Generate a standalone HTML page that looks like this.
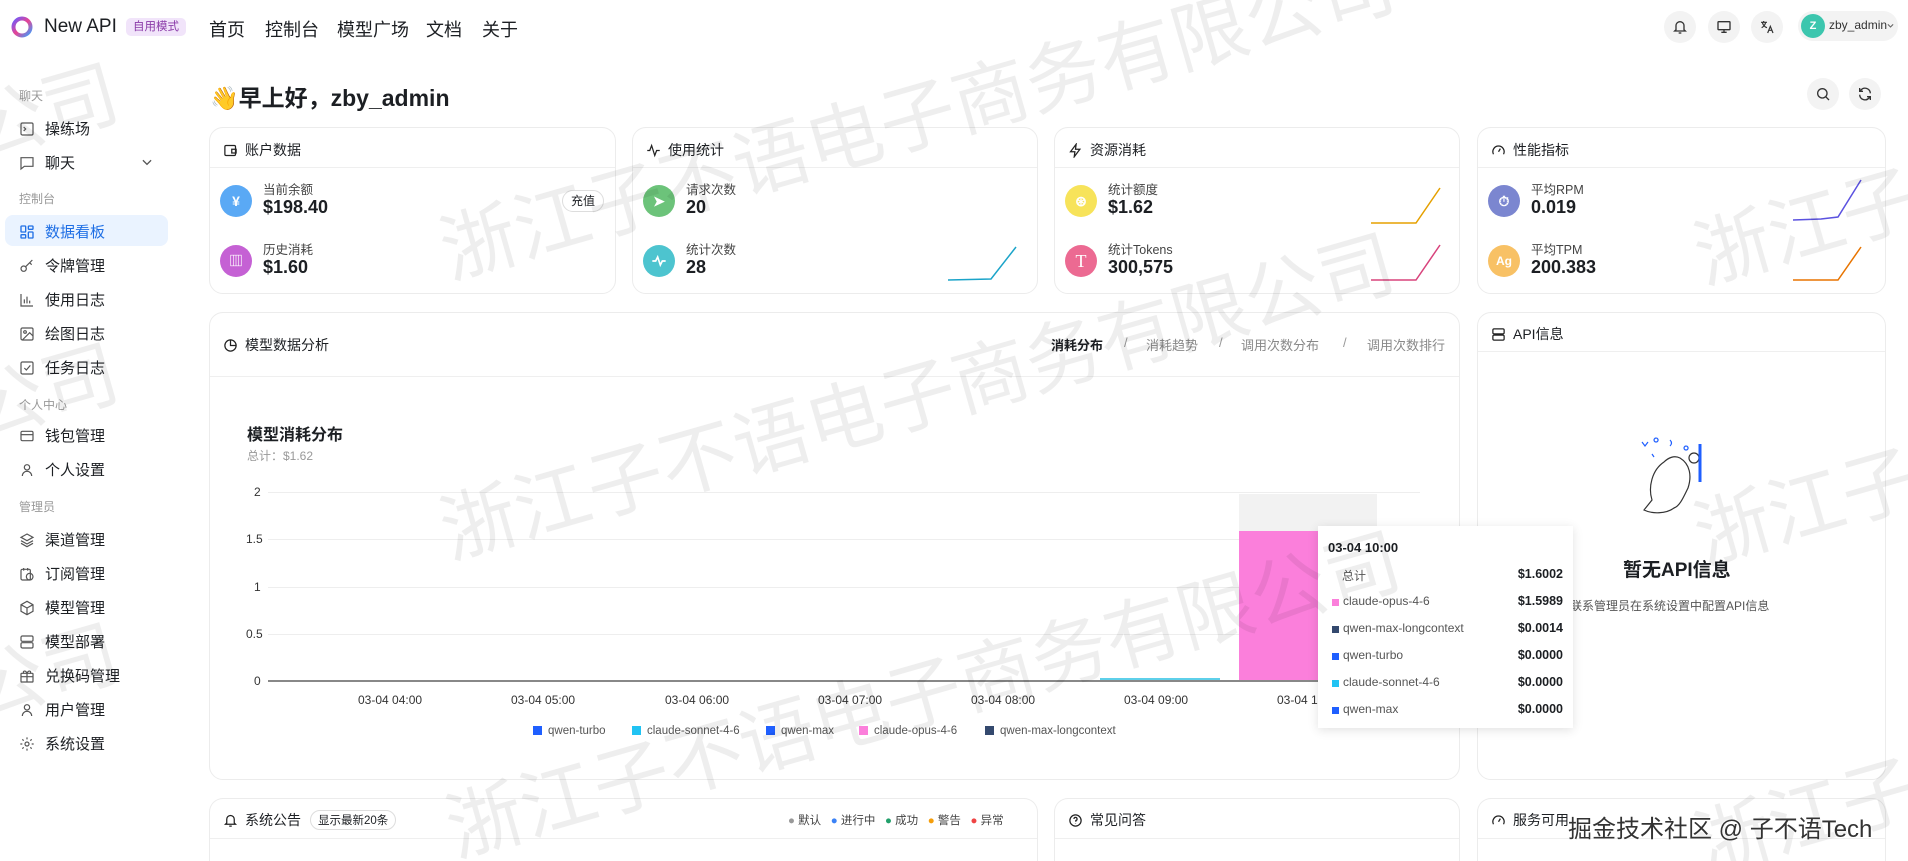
<!DOCTYPE html>
<html style="width:1908px;height:861px;overflow:hidden"><head><meta charset="utf-8">
<style>
*{margin:0;padding:0;box-sizing:border-box}
body{width:1908px;height:861px;overflow:hidden;background:#fff;font-family:"Liberation Sans","Noto Sans CJK SC",sans-serif;color:#1c1f23;position:relative}
.a{position:absolute;white-space:nowrap}
.card{position:absolute;border:1px solid #ececec;border-radius:14px;background:#fff}
.bc{border-bottom:none;border-bottom-left-radius:0;border-bottom-right-radius:0}
.hd{position:absolute;left:0;right:0;border-bottom:1px solid #efefef}
.ht{position:absolute;font-size:14px;color:#1c1f23;display:flex;align-items:center;gap:7px}
.sb{font-size:15px;color:#1c1f23;display:flex;align-items:center}
.sb svg{margin-right:10px}
.lab{font-size:12px;color:#999}
.circ{position:absolute;width:32px;height:32px;border-radius:50%;display:flex;align-items:center;justify-content:center;color:#fff;font-size:14px;font-weight:bold}
.sl{font-size:12.5px;color:#444}
.sv{font-size:18px;font-weight:bold;color:#1c1f23}
.wm{position:absolute;font-size:76px;color:rgba(0,0,0,0.065);transform:rotate(-16deg);transform-origin:0 100%;white-space:nowrap;font-family:"Noto Sans CJK SC",sans-serif;pointer-events:none;z-index:50}
.wmbox{position:absolute;left:0;top:0;width:1908px;height:861px;overflow:hidden;z-index:50;pointer-events:none}
.ax{font-size:12px;color:#333}
.sq{display:inline-block;width:9px;height:9px;margin-right:6px;vertical-align:-1px}
.ib{position:absolute;width:32px;height:32px;border-radius:50%;background:#f3f3f3;display:flex;align-items:center;justify-content:center}
</style></head><body>

<!-- header -->
<svg class="a" style="left:10px;top:15px" width="24" height="24" viewBox="0 0 24 24"><defs><linearGradient id="g1" x1="0" y1="0" x2="1" y2="1"><stop offset="0" stop-color="#6b5cff"/><stop offset=".5" stop-color="#e84393"/><stop offset="1" stop-color="#3aa0ff"/></linearGradient></defs><circle cx="12" cy="12" r="8.5" fill="none" stroke="url(#g1)" stroke-width="4"/><circle cx="12" cy="12" r="2" fill="#fff"/></svg>
<div class="a" style="left:44px;top:16px;font-size:19px;color:#1c1f23">New API</div>
<div class="a" style="left:126px;top:18px;width:60px;height:18px;border-radius:5px;background:#f1e4fa;color:#8a3aa8;font-size:11.5px;text-align:center;line-height:18px">自用模式</div>
<div class="a" style="left:209px;top:16px;font-size:18px">首页</div>
<div class="a" style="left:265px;top:16px;font-size:18px">控制台</div>
<div class="a" style="left:337px;top:16px;font-size:18px">模型广场</div>
<div class="a" style="left:426px;top:16px;font-size:18px">文档</div>
<div class="a" style="left:482px;top:16px;font-size:18px">关于</div>

<div class="ib" style="left:1664px;top:11px"><svg width="16" height="16" viewBox="0 0 24 24" fill="none" stroke="#333" stroke-width="2"><path d="M6 16V10a6 6 0 0 1 12 0v6l2 2H4z"/><path d="M10 21h4"/></svg></div>
<div class="ib" style="left:1708px;top:11px"><svg width="16" height="16" viewBox="0 0 24 24" fill="none" stroke="#333" stroke-width="2"><rect x="3" y="4" width="18" height="12" rx="1"/><path d="M12 16v4M8 20h8"/></svg></div>
<div class="ib" style="left:1751px;top:11px"><svg width="16" height="16" viewBox="0 0 24 24" fill="none" stroke="#333" stroke-width="1.8"><path d="M3 5h9M7 3v2M5 5c1 4 4 7 7 8M10 5c-1 4-4 7-6 8M13 21l4-10 4 10M14.5 17h5"/></svg></div>
<div class="a" style="left:1798px;top:11px;width:100px;height:30px;border-radius:15px;background:#f3f3f3"></div>
<div class="a" style="left:1801px;top:14px;width:24px;height:24px;border-radius:50%;background:#3cc6ae;color:#fff;font-size:11px;font-weight:bold;text-align:center;line-height:24px">Z</div>
<div class="a" style="left:1829px;top:18px;font-size:12px;color:#333">zby_admin</div>
<svg class="a" style="left:1886px;top:21px" width="9" height="9" viewBox="0 0 24 24" fill="none" stroke="#666" stroke-width="3"><path d="M5 9l7 7 7-7"/></svg>

<!-- sidebar -->
<div class="a lab" style="left:19px;top:87px">聊天</div>
<div class="a sb" style="left:19px;top:118px"><svg width="16" height="16" viewBox="0 0 24 24" fill="none" stroke="#555" stroke-width="1.8"><rect x="3" y="3" width="18" height="18" rx="2"/><path d="M7 9l3 3-3 3"/></svg>操练场</div>
<div class="a sb" style="left:19px;top:152px"><svg width="16" height="16" viewBox="0 0 24 24" fill="none" stroke="#555" stroke-width="1.8"><path d="M3 4h18v13H8l-5 4z"/></svg>聊天</div>
<svg class="a" style="left:140px;top:155px" width="14" height="14" viewBox="0 0 24 24" fill="none" stroke="#555" stroke-width="2.2"><path d="M5 9l7 7 7-7"/></svg>
<div class="a lab" style="left:19px;top:190px">控制台</div>
<div class="a" style="left:5px;top:215px;width:163px;height:31px;border-radius:8px;background:#eaf3ff"></div>
<div class="a sb" style="left:19px;top:221px;color:#1f6fe5"><svg width="16" height="16" viewBox="0 0 24 24" fill="none" stroke="#1f6fe5" stroke-width="2"><rect x="3" y="3" width="7" height="9" rx="1"/><rect x="14" y="3" width="7" height="5" rx="1"/><rect x="14" y="12" width="7" height="9" rx="1"/><rect x="3" y="16" width="7" height="5" rx="1"/></svg>数据看板</div>
<div class="a sb" style="left:19px;top:255px"><svg width="16" height="16" viewBox="0 0 24 24" fill="none" stroke="#555" stroke-width="1.8"><circle cx="7" cy="16" r="4"/><path d="M10 13l10-10M16 7l3 3"/></svg>令牌管理</div>
<div class="a sb" style="left:19px;top:289px"><svg width="16" height="16" viewBox="0 0 24 24" fill="none" stroke="#555" stroke-width="1.8"><path d="M3 3v18h18M8 17v-6M12 17V7M16 17v-4"/></svg>使用日志</div>
<div class="a sb" style="left:19px;top:323px"><svg width="16" height="16" viewBox="0 0 24 24" fill="none" stroke="#555" stroke-width="1.8"><rect x="3" y="3" width="18" height="18" rx="2"/><circle cx="9" cy="9" r="2"/><path d="M21 15l-5-5L5 21"/></svg>绘图日志</div>
<div class="a sb" style="left:19px;top:357px"><svg width="16" height="16" viewBox="0 0 24 24" fill="none" stroke="#555" stroke-width="1.8"><rect x="3" y="3" width="18" height="18" rx="2"/><path d="M8 12l3 3 6-7"/></svg>任务日志</div>
<div class="a lab" style="left:19px;top:396px">个人中心</div>
<div class="a sb" style="left:19px;top:425px"><svg width="16" height="16" viewBox="0 0 24 24" fill="none" stroke="#555" stroke-width="1.8"><rect x="3" y="5" width="18" height="14" rx="2"/><path d="M3 10h18"/></svg>钱包管理</div>
<div class="a sb" style="left:19px;top:459px"><svg width="16" height="16" viewBox="0 0 24 24" fill="none" stroke="#555" stroke-width="1.8"><circle cx="12" cy="8" r="4"/><path d="M5 21c0-4 3-7 7-7s7 3 7 7"/></svg>个人设置</div>
<div class="a lab" style="left:19px;top:498px">管理员</div>
<div class="a sb" style="left:19px;top:529px"><svg width="16" height="16" viewBox="0 0 24 24" fill="none" stroke="#555" stroke-width="1.8"><path d="M12 3l9 5-9 5-9-5z M3 13l9 5 9-5M3 17l9 5 9-5"/></svg>渠道管理</div>
<div class="a sb" style="left:19px;top:563px"><svg width="16" height="16" viewBox="0 0 24 24" fill="none" stroke="#555" stroke-width="1.8"><rect x="3" y="5" width="14" height="16" rx="2"/><path d="M7 3v4M13 3v4"/><circle cx="16" cy="16" r="5"/></svg>订阅管理</div>
<div class="a sb" style="left:19px;top:597px"><svg width="16" height="16" viewBox="0 0 24 24" fill="none" stroke="#555" stroke-width="1.8"><path d="M12 2l9 5v10l-9 5-9-5V7z M3 7l9 5 9-5M12 12v10"/></svg>模型管理</div>
<div class="a sb" style="left:19px;top:631px"><svg width="16" height="16" viewBox="0 0 24 24" fill="none" stroke="#555" stroke-width="1.8"><rect x="3" y="3" width="18" height="8" rx="2"/><rect x="3" y="13" width="18" height="8" rx="2"/></svg>模型部署</div>
<div class="a sb" style="left:19px;top:665px"><svg width="16" height="16" viewBox="0 0 24 24" fill="none" stroke="#555" stroke-width="1.8"><rect x="3" y="8" width="18" height="13" rx="1"/><path d="M12 8v13M3 13h18M12 8c-2-5-7-4-5 0M12 8c2-5 7-4 5 0"/></svg>兑换码管理</div>
<div class="a sb" style="left:19px;top:699px"><svg width="16" height="16" viewBox="0 0 24 24" fill="none" stroke="#555" stroke-width="1.8"><circle cx="12" cy="8" r="4"/><path d="M5 21c0-4 3-7 7-7s7 3 7 7"/></svg>用户管理</div>
<div class="a sb" style="left:19px;top:733px"><svg width="16" height="16" viewBox="0 0 24 24" fill="none" stroke="#555" stroke-width="1.8"><circle cx="12" cy="12" r="3"/><path d="M12 2v3M12 19v3M2 12h3M19 12h3M5 5l2 2M17 17l2 2M5 19l2-2M17 7l2-2"/></svg>系统设置</div>

<!-- greeting -->
<div class="a" style="left:210px;top:79px;font-size:23px;font-weight:bold">👋早上好，zby_admin</div>
<div class="ib" style="left:1807px;top:78px"><svg width="16" height="16" viewBox="0 0 24 24" fill="none" stroke="#333" stroke-width="2"><circle cx="11" cy="11" r="7"/><path d="M16 16l5 5"/></svg></div>
<div class="ib" style="left:1849px;top:78px"><svg width="16" height="16" viewBox="0 0 24 24" fill="none" stroke="#333" stroke-width="2"><path d="M20 11a8 8 0 0 0-14-5l-2 2M4 13a8 8 0 0 0 14 5l2-2M4 3v5h5M20 21v-5h-5"/></svg></div>

<!-- row cards -->
<div class="card" style="left:209px;top:127px;width:407px;height:167px">
 <div class="hd" style="top:0;height:40px"></div>
 <div class="ht" style="left:13px;top:12px"><svg width="15" height="15" viewBox="0 0 24 24" fill="none" stroke="#222" stroke-width="2"><rect x="3" y="4" width="17" height="16" rx="2"/><path d="M14 10h7v6h-7z"/></svg>账户数据</div>
 <div class="circ" style="left:10px;top:57px;background:#5aa9f5">¥</div>
 <div class="a sl" style="left:53px;top:51px">当前余额</div>
 <div class="a sv" style="left:53px;top:69px">$198.40</div>
 <div class="a" style="left:352px;top:62px;width:42px;height:22px;border:1px solid #ddd;border-radius:11px;font-size:12px;text-align:center;line-height:20px">充值</div>
 <div class="circ" style="left:10px;top:117px;background:#c561d4">▥</div>
 <div class="a sl" style="left:53px;top:111px">历史消耗</div>
 <div class="a sv" style="left:53px;top:129px">$1.60</div>
</div>
<div class="card" style="left:632px;top:127px;width:406px;height:167px">
 <div class="hd" style="top:0;height:40px"></div>
 <div class="ht" style="left:13px;top:12px"><svg width="15" height="15" viewBox="0 0 24 24" fill="none" stroke="#222" stroke-width="2"><path d="M2 12h4l3-8 5 16 3-8h5"/></svg>使用统计</div>
 <div class="circ" style="left:10px;top:57px;background:#6cc37a">➤</div>
 <div class="a sl" style="left:53px;top:51px">请求次数</div>
 <div class="a sv" style="left:53px;top:69px">20</div>
 <div class="circ" style="left:10px;top:117px;background:#4dc4cf"><svg width="16" height="16" viewBox="0 0 24 24" fill="none" stroke="#fff" stroke-width="2.5"><path d="M2 12h5l3-6 4 12 3-6h5"/></svg></div>
 <div class="a sl" style="left:53px;top:111px">统计次数</div>
 <div class="a sv" style="left:53px;top:129px">28</div>
 <svg class="a" style="left:313px;top:115px" width="75" height="40"><polyline points="2,37 45,36 70,4" fill="none" stroke="#1ba4c9" stroke-width="1.5"/></svg>
</div>
<div class="card" style="left:1054px;top:127px;width:406px;height:167px">
 <div class="hd" style="top:0;height:40px"></div>
 <div class="ht" style="left:13px;top:12px"><svg width="15" height="15" viewBox="0 0 24 24" fill="none" stroke="#222" stroke-width="2"><path d="M13 2L4 14h7l-1 8 9-12h-7z"/></svg>资源消耗</div>
 <div class="circ" style="left:10px;top:57px;background:#f7e35a">⊛</div>
 <div class="a sl" style="left:53px;top:51px">统计额度</div>
 <div class="a sv" style="left:53px;top:69px">$1.62</div>
 <div class="circ" style="left:10px;top:117px;background:#ec6a92;font-family:'Liberation Serif',serif;font-size:18px;font-weight:normal">T</div>
 <div class="a sl" style="left:53px;top:111px">统计Tokens</div>
 <div class="a sv" style="left:53px;top:129px">300,575</div>
 <svg class="a" style="left:314px;top:58px" width="75" height="40"><polyline points="2,37 47,37 71,2" fill="none" stroke="#e5a000" stroke-width="1.5"/></svg>
 <svg class="a" style="left:314px;top:115px" width="75" height="40"><polyline points="2,37 47,37 71,2" fill="none" stroke="#d8437c" stroke-width="1.5"/></svg>
</div>
<div class="card" style="left:1477px;top:127px;width:409px;height:167px">
 <div class="hd" style="top:0;height:40px"></div>
 <div class="ht" style="left:13px;top:12px"><svg width="15" height="15" viewBox="0 0 24 24" fill="none" stroke="#222" stroke-width="2"><path d="M4 18a9 9 0 1 1 16 0M12 14l3-5"/></svg>性能指标</div>
 <div class="circ" style="left:10px;top:57px;background:#7b86d0">⏱</div>
 <div class="a sl" style="left:53px;top:51px">平均RPM</div>
 <div class="a sv" style="left:53px;top:69px">0.019</div>
 <div class="circ" style="left:10px;top:117px;background:#f8c165;font-size:12px">Ag</div>
 <div class="a sl" style="left:53px;top:111px">平均TPM</div>
 <div class="a sv" style="left:53px;top:129px">200.383</div>
 <svg class="a" style="left:313px;top:50px" width="75" height="45"><polyline points="2,42 30,41 47,39 70,2" fill="none" stroke="#5b52e0" stroke-width="1.5"/></svg>
 <svg class="a" style="left:313px;top:115px" width="75" height="40"><polyline points="2,37 47,37 70,4" fill="none" stroke="#e87400" stroke-width="1.5"/></svg>
</div>

<!-- chart card -->
<div class="card" style="left:209px;top:312px;width:1251px;height:468px">
 <div class="hd" style="top:0;height:64px"></div>
 <div class="ht" style="left:13px;top:22px"><svg width="15" height="15" viewBox="0 0 24 24" fill="none" stroke="#222" stroke-width="2"><circle cx="12" cy="12" r="9"/><path d="M12 3v9h9"/></svg>模型数据分析</div>
 <div class="a" style="left:841px;top:22px;font-size:13px;color:#1c1f23;font-weight:bold">消耗分布</div>
 <div class="a" style="left:914px;top:22px;font-size:13px;color:#999">/</div>
 <div class="a" style="left:936px;top:22px;font-size:13px;color:#888">消耗趋势</div>
 <div class="a" style="left:1009px;top:22px;font-size:13px;color:#999">/</div>
 <div class="a" style="left:1031px;top:22px;font-size:13px;color:#888">调用次数分布</div>
 <div class="a" style="left:1133px;top:22px;font-size:13px;color:#999">/</div>
 <div class="a" style="left:1157px;top:22px;font-size:13px;color:#888">调用次数排行</div>
</div>
<div class="a" style="left:247px;top:421px;font-size:16px;font-weight:bold">模型消耗分布</div>
<div class="a" style="left:247px;top:447px;font-size:12px;color:#999">总计：$1.62</div>
<!-- chart -->
<div class="a" style="left:1239px;top:494px;width:138px;height:187px;background:#f2f2f2"></div>
<div class="a" style="left:268px;top:492px;width:1152px;height:1px;background:#eee"></div>
<div class="a" style="left:268px;top:539px;width:1152px;height:1px;background:#eee"></div>
<div class="a" style="left:268px;top:587px;width:1152px;height:1px;background:#eee"></div>
<div class="a" style="left:268px;top:634px;width:1152px;height:1px;background:#eee"></div>
<div class="a" style="left:1239px;top:531px;width:138px;height:150px;background:#fb7fdb"></div>
<div class="a" style="left:1100px;top:678px;width:120px;height:2px;background:#5ed0ea"></div>
<div class="a" style="left:268px;top:680px;width:1152px;height:2px;background:#888"></div>
<div class="a ax" style="left:254px;top:485px">2</div>
<div class="a ax" style="left:246px;top:532px">1.5</div>
<div class="a ax" style="left:254px;top:580px">1</div>
<div class="a ax" style="left:246px;top:627px">0.5</div>
<div class="a ax" style="left:254px;top:674px">0</div>
<div class="a ax" style="left:358px;top:693px">03-04 04:00</div>
<div class="a ax" style="left:511px;top:693px">03-04 05:00</div>
<div class="a ax" style="left:665px;top:693px">03-04 06:00</div>
<div class="a ax" style="left:818px;top:693px">03-04 07:00</div>
<div class="a ax" style="left:971px;top:693px">03-04 08:00</div>
<div class="a ax" style="left:1124px;top:693px">03-04 09:00</div>
<div class="a ax" style="left:1277px;top:693px">03-04 10:00</div>
<div class="a" style="left:533px;top:725px;font-size:11.5px;color:#555"><span class="sq" style="background:#1f5fff"></span>qwen-turbo</div>
<div class="a" style="left:632px;top:725px;font-size:11.5px;color:#555"><span class="sq" style="background:#21c3f3"></span>claude-sonnet-4-6</div>
<div class="a" style="left:766px;top:725px;font-size:11.5px;color:#555"><span class="sq" style="background:#1f5fff"></span>qwen-max</div>
<div class="a" style="left:859px;top:725px;font-size:11.5px;color:#555"><span class="sq" style="background:#fb7fdb"></span>claude-opus-4-6</div>
<div class="a" style="left:985px;top:725px;font-size:11.5px;color:#555"><span class="sq" style="background:#34496e"></span>qwen-max-longcontext</div>

<!-- API card -->
<div class="card" style="left:1477px;top:312px;width:409px;height:468px">
 <div class="hd" style="top:0;height:39px"></div>
 <div class="ht" style="left:13px;top:11px"><svg width="15" height="15" viewBox="0 0 24 24" fill="none" stroke="#222" stroke-width="2"><rect x="3" y="3" width="18" height="8" rx="2"/><rect x="3" y="13" width="18" height="8" rx="2"/></svg>API信息</div>
</div>
<svg class="a" style="left:1634px;top:432px" width="90" height="90" viewBox="0 0 90 90" fill="none" stroke="#333" stroke-width="1.2"><path d="M30 30c-12 8-16 25-12 38l-8 10c8 4 22 4 30-2 6-2 10-12 14-20 4-12 2-24-8-30-6-3-12 0-16 4z"/><circle cx="60" cy="26" r="5"/><path d="M66 12v38" stroke="#1f5fff" stroke-width="3"/><path d="M8 10l3 4 3-4M22 6a2 2 0 1 0 0.1 0M36 8c2 2 2 4 0 6M18 22l2 3M52 14a2 2 0 1 0 .1 0" stroke="#1f5fff"/></svg>
<div class="a" style="left:1623px;top:555px;font-size:19px;font-weight:bold">暂无API信息</div>
<div class="a" style="left:1570px;top:597px;font-size:12px;color:#555">联系管理员在系统设置中配置API信息</div>

<!-- tooltip -->
<div class="a" style="left:1318px;top:526px;width:255px;height:202px;background:#fff;box-shadow:0 2px 10px rgba(0,0,0,.12);z-index:10">
 <div class="a" style="left:10px;top:14px;font-size:13px;font-weight:bold">03-04 10:00</div>
 <div class="a" style="left:24px;top:41px;font-size:12px;color:#555">总计</div>
 <div class="a" style="right:10px;top:41px;font-size:12.5px;font-weight:bold">$1.6002</div>
 <div class="a" style="left:14px;top:68px;font-size:12px;color:#555"><span class="sq" style="background:#fb7fdb;width:7px;height:7px;margin-right:4px"></span>claude-opus-4-6</div>
 <div class="a" style="right:10px;top:68px;font-size:12.5px;font-weight:bold">$1.5989</div>
 <div class="a" style="left:14px;top:95px;font-size:12px;color:#555"><span class="sq" style="background:#34496e;width:7px;height:7px;margin-right:4px"></span>qwen-max-longcontext</div>
 <div class="a" style="right:10px;top:95px;font-size:12.5px;font-weight:bold">$0.0014</div>
 <div class="a" style="left:14px;top:122px;font-size:12px;color:#555"><span class="sq" style="background:#1f5fff;width:7px;height:7px;margin-right:4px"></span>qwen-turbo</div>
 <div class="a" style="right:10px;top:122px;font-size:12.5px;font-weight:bold">$0.0000</div>
 <div class="a" style="left:14px;top:149px;font-size:12px;color:#555"><span class="sq" style="background:#21c3f3;width:7px;height:7px;margin-right:4px"></span>claude-sonnet-4-6</div>
 <div class="a" style="right:10px;top:149px;font-size:12.5px;font-weight:bold">$0.0000</div>
 <div class="a" style="left:14px;top:176px;font-size:12px;color:#555"><span class="sq" style="background:#1f5fff;width:7px;height:7px;margin-right:4px"></span>qwen-max</div>
 <div class="a" style="right:10px;top:176px;font-size:12.5px;font-weight:bold">$0.0000</div>
</div>

<!-- bottom row -->
<div class="card bc" style="left:209px;top:798px;width:829px;height:63px">
 <div class="hd" style="top:0;height:40px"></div>
 <div class="ht" style="left:13px;top:11px"><svg width="15" height="15" viewBox="0 0 24 24" fill="none" stroke="#222" stroke-width="2"><path d="M6 16V10a6 6 0 0 1 12 0v6l2 2H4z"/><path d="M10 21h4"/></svg>系统公告<span style="border:1px solid #ddd;border-radius:10px;font-size:11.5px;padding:1px 7px;margin-left:2px">显示最新20条</span></div>
 <div class="a" style="left:578px;top:13px;font-size:11.5px;color:#444"><span style="color:#999">●</span> 默认 &nbsp; <span style="color:#3b82f6">●</span> 进行中 &nbsp; <span style="color:#22a06b">●</span> 成功 &nbsp; <span style="color:#f59e0b">●</span> 警告 &nbsp; <span style="color:#ef4444">●</span> 异常</div>
</div>
<div class="card bc" style="left:1054px;top:798px;width:406px;height:63px">
 <div class="hd" style="top:0;height:40px"></div>
 <div class="ht" style="left:13px;top:11px"><svg width="15" height="15" viewBox="0 0 24 24" fill="none" stroke="#222" stroke-width="2"><circle cx="12" cy="12" r="9"/><path d="M9.5 9.5a2.5 2.5 0 1 1 3 2.5v2M12 17v.5"/></svg>常见问答</div>
</div>
<div class="card bc" style="left:1477px;top:798px;width:409px;height:63px">
 <div class="hd" style="top:0;height:40px"></div>
 <div class="ht" style="left:13px;top:11px"><svg width="15" height="15" viewBox="0 0 24 24" fill="none" stroke="#222" stroke-width="2"><path d="M4 18a9 9 0 1 1 16 0M12 14l3-5"/></svg>服务可用</div>
</div>
<div class="a" style="left:1568px;top:809px;font-size:24px;color:#333;z-index:60;text-shadow:0 0 2px #fff,0 0 2px #fff">掘金技术社区 @ 子不语Tech</div>

<!-- watermarks -->
<div class="wmbox">
<div class="wm" style="left:456px;top:190px">浙江子不语电子商务有限公司</div>
<div class="wm" style="left:456px;top:470px">浙江子不语电子商务有限公司</div>
<div class="wm" style="left:462px;top:768px">浙江子不语电子商务有限公司</div>
<div class="wm" style="left:-820px;top:300px">浙江子不语电子商务有限公司</div>
<div class="wm" style="left:-820px;top:580px">浙江子不语电子商务有限公司</div>
<div class="wm" style="left:-820px;top:860px">浙江子不语电子商务有限公司</div>
<div class="wm" style="left:1710px;top:195px">浙江子不语电子商务有限公司</div>
<div class="wm" style="left:1710px;top:475px">浙江子不语电子商务有限公司</div>
<div class="wm" style="left:1710px;top:785px">浙江子不语电子商务有限公司</div>
</div>
</body></html>
